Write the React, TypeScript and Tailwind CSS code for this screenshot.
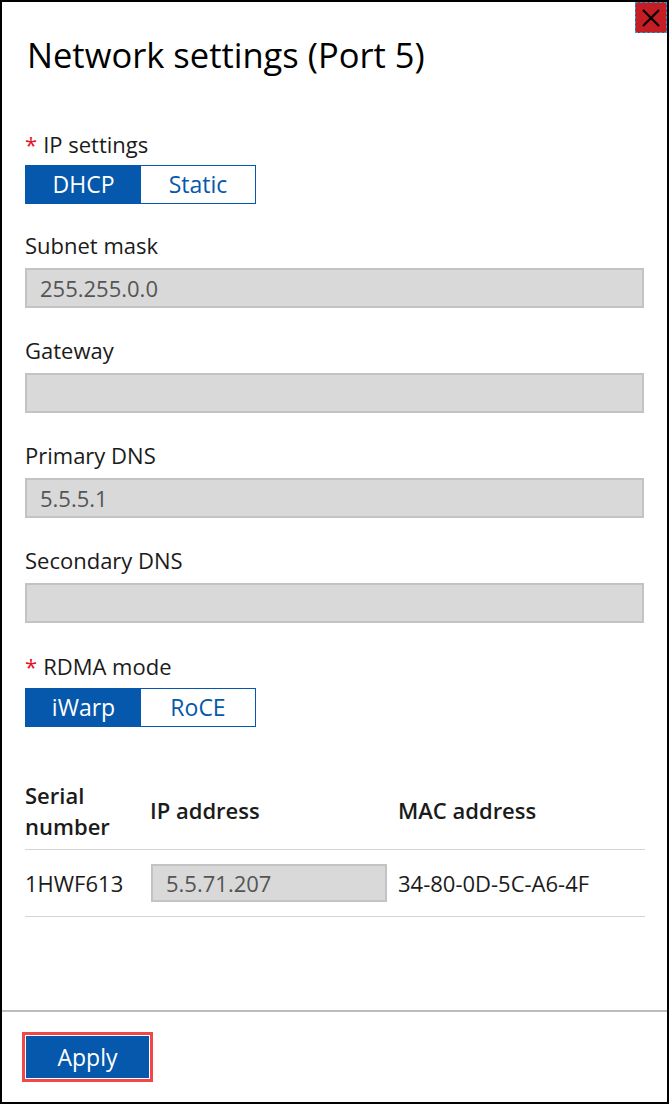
import React from "react";

const font = { fontFamily: '"Open Sans", "Noto Sans", sans-serif' };

function Label({ text, required }: { text: string; required?: boolean }) {
  return (
    <div className="h-[30px] flex items-center text-[22px] leading-[30px] text-[#1b1b1b]">
      {required && <span className="text-[#e81123] mr-[6px] text-[22px]">*</span>}
      <span>{text}</span>
    </div>
  );
}

function Field({ label, value }: { label: string; value: string }) {
  return (
    <div className="flex flex-col">
      <Label text={label} />
      <div className="mt-[8px] h-[40px] w-[619px] bg-[#d9d9d9] border-2 border-[#c3c3c3] flex items-center pl-[13px] text-[22px] text-[#555555]">
        {value}
      </div>
    </div>
  );
}

function Toggle({ a, b }: { a: string; b: string }) {
  return (
    <div className="flex h-[39px] w-[231px] border border-[#0558ab]">
      <div className="w-[115px] bg-[#0558ab] text-white flex items-center justify-center text-[23px]">{a}</div>
      <div className="flex-1 bg-white text-[#0558ab] flex items-center justify-center text-[23px]">{b}</div>
    </div>
  );
}

export default function App() {
  return (
    <div style={font} className="relative w-[669px] h-[1104px] bg-white border-2 border-black flex flex-col overflow-hidden">
      <button className="absolute top-0 right-0 w-[32px] h-[31px] bg-[#c41d24] border border-dashed border-[#1aa3dc] flex items-center justify-center">
        <svg width="20" height="20" viewBox="0 0 20 20">
          <path d="M2 2 L18 18 M18 2 L2 18" stroke="#000" strokeWidth="2.2" />
        </svg>
      </button>
      <div className="flex-1 flex flex-col pl-[23px] pr-[22px]">
        <div className="mt-[30px] ml-[2px] h-[46px] flex items-center text-[34.5px] text-black">Network settings (Port 5)</div>
        <div className="mt-[51px]">
          <Label text="IP settings" required />
          <div className="mt-[6px]">
            <Toggle a="DHCP" b="Static" />
          </div>
        </div>
        <div className="mt-[26px] flex flex-col gap-[27px]">
          <Field label="Subnet mask" value="255.255.0.0" />
          <Field label="Gateway" value="" />
          <Field label="Primary DNS" value="5.5.5.1" />
          <Field label="Secondary DNS" value="" />
        </div>
        <div className="mt-[28px]">
          <Label text="RDMA mode" required />
          <div className="mt-[7px]">
            <Toggle a="iWarp" b="RoCE" />
          </div>
        </div>
        <div className="mt-[45px] w-[620px]">
          <div className="grid grid-cols-[125px_248px_247px] items-center h-[78px] border-b border-[#d4d4d4] text-[22px] font-semibold text-[#1b1b1b] leading-[31px]">
            <div>Serial<br />number</div>
            <div>IP address</div>
            <div>MAC address</div>
          </div>
          <div className="grid grid-cols-[125px_248px_247px] items-center h-[67px] border-b border-[#d4d4d4] text-[22px] text-[#1b1b1b]">
            <div>1HWF613</div>
            <div className="pl-[1px] pr-[11px]">
              <div className="h-[38px] bg-[#d9d9d9] border-2 border-[#c3c3c3] flex items-center pl-[13px] text-[#555555]">5.5.71.207</div>
            </div>
            <div>34-80-0D-5C-A6-4F</div>
          </div>
        </div>
      </div>
      <div className="h-[92px] border-t-2 border-[#bdbdbd] pl-[20px] pt-[20px]">
        <div className="w-[131px] h-[50px] border-[3px] border-[#f04848]">
          <div className="w-full h-full bg-[#0558ab] border border-white flex items-center justify-center text-white text-[23px]">Apply</div>
        </div>
      </div>
    </div>
  );
}
